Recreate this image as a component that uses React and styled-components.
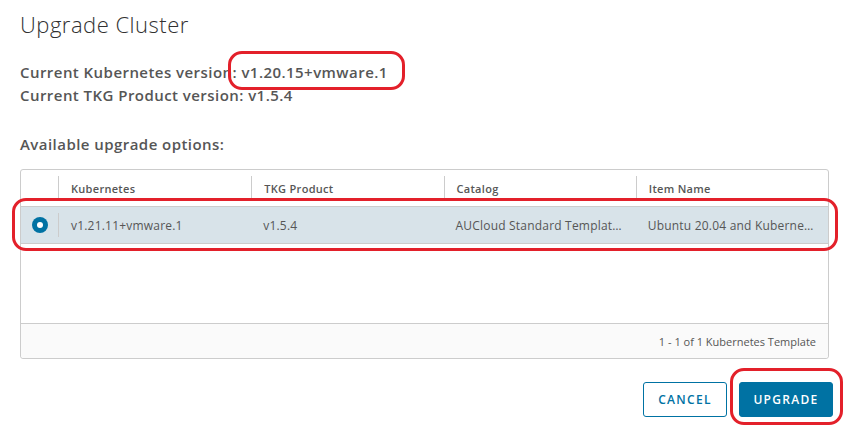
import styled, { createGlobalStyle } from 'styled-components';

const columns = ['Kubernetes', 'TKG Product', 'Catalog', 'Item Name'];

const rows = [
  {
    id: 'tkr-1',
    values: [
      'v1.21.11+vmware.1',
      'v1.5.4',
      'AUCloud Standard Templates',
      'Ubuntu 20.04 and Kubernetes v1.21.11',
    ],
  },
];

export default function App() {
  return (
    <>
      <GlobalStyle />
      <Dialog>
        <Title>Upgrade Cluster</Title>
        <Info>
          <InfoLine>
            Current Kubernetes version
            <Marked>
              : v1.20.15+vmware.1
              <Highlight $top={-10} $right={-17} $bottom={-6} $left={-5} />
            </Marked>
          </InfoLine>
          <InfoLine>Current TKG Product version: v1.5.4</InfoLine>
        </Info>
        <Label>Available upgrade options:</Label>

        <Grid>
          <HeaderRow>
            <SelectCell />
            {columns.map(col => (
              <HeadCell key={col}>{col}</HeadCell>
            ))}
          </HeaderRow>
          {rows.map(row => (
            <Row key={row.id} $selected>
              <SelectCell>
                <Radio />
              </SelectCell>
              {row.values.map((v, i) => (
                <Cell key={i}>{v}</Cell>
              ))}
              <Highlight $top={-9} $right={-10} $bottom={-8} $left={-9} />
            </Row>
          ))}
          <Body />
          <Footer>1 - 1 of 1 Kubernetes Template</Footer>
        </Grid>

        <Actions>
          <OutlineButton type="button">Cancel</OutlineButton>
          <Marked>
            <SolidButton type="button">Upgrade</SolidButton>
            <Highlight $top={-14} $right={-10} $bottom={-8} $left={-9} />
          </Marked>
        </Actions>
      </Dialog>
    </>
  );
}

const GlobalStyle = createGlobalStyle`
  body {
    margin: 0;
    background: #ffffff;
    font-family: "Open Sans", Lato, sans-serif;
  }
`;

const Dialog = styled.div`
  width: 846px;
  height: 433px;
  box-sizing: border-box;
  padding: 8px 17px 0 20px;
  display: flex;
  flex-direction: column;
`;

const Title = styled.h1`
  margin: 0;
  font-size: 22px;
  line-height: 32px;
  font-weight: 300;
  letter-spacing: 0.5px;
  color: #313131;
`;

const Info = styled.div`
  margin-top: 21px;
  display: flex;
  flex-direction: column;
`;

const InfoLine = styled.div`
  font-size: 15px;
  line-height: 23px;
  font-weight: 600;
  letter-spacing: 0.45px;
  color: #565656;
`;

const Marked = styled.span`
  position: relative;
  display: inline-block;
`;

const Highlight = styled.span`
  position: absolute;
  top: ${p => p.$top}px;
  right: ${p => p.$right}px;
  bottom: ${p => p.$bottom}px;
  left: ${p => p.$left}px;
  border: 3px solid #e3202a;
  border-radius: 14px;
  pointer-events: none;
`;

const Label = styled(InfoLine)`
  margin-top: 26px;
`;

const Grid = styled.div`
  margin-top: 13px;
  border: 1px solid #cccccc;
  border-radius: 3px;
  display: flex;
  flex-direction: column;
  height: 190px;
  box-sizing: border-box;
`;

const HeaderRow = styled.div`
  display: grid;
  grid-template-columns: 38px repeat(4, 1fr);
  height: 36px;
  align-items: center;
  border-bottom: 1px solid #cccccc;
`;

const SelectCell = styled.div`
  height: 24px;
  display: flex;
  align-items: center;
  justify-content: center;
  border-right: 1px solid #cccccc;
`;

const HeadCell = styled.div`
  padding: 0 12px;
  height: 24px;
  display: flex;
  align-items: center;
  font-size: 11px;
  font-weight: 600;
  letter-spacing: 0.3px;
  color: #565656;
  & + & {
    border-left: 1px solid #cccccc;
  }
`;

const Row = styled.div`
  position: relative;
  display: grid;
  grid-template-columns: 38px repeat(4, 1fr);
  height: 36px;
  align-items: center;
  background: ${p => (p.$selected ? '#d8e3e9' : '#ffffff')};
  border-bottom: 1px solid #cccccc;
`;

const Radio = styled.span`
  width: 16px;
  height: 16px;
  border-radius: 50%;
  background: #0072a3;
  display: flex;
  align-items: center;
  justify-content: center;
  &::after {
    content: '';
    width: 6px;
    height: 6px;
    border-radius: 50%;
    background: #ffffff;
  }
`;

const Cell = styled.div`
  padding: 0 12px;
  font-size: 12px;
  letter-spacing: 0.2px;
  color: #565656;
  white-space: nowrap;
  overflow: hidden;
  text-overflow: ellipsis;
`;

const Body = styled.div`
  flex: 1;
`;

const Footer = styled.div`
  height: 34px;
  border-top: 1px solid #cccccc;
  background: #fafafa;
  display: flex;
  align-items: center;
  justify-content: flex-end;
  padding: 0 12px;
  font-size: 11px;
  color: #565656;
  border-radius: 0 0 3px 3px;
`;

const Actions = styled.div`
  margin-top: 23px;
  margin-right: -4px;
  display: flex;
  justify-content: flex-end;
  gap: 12px;
`;

const BaseButton = styled.button`
  height: 35px;
  padding: 0;
  border-radius: 3px;
  font-family: "Open Sans", Lato, sans-serif;
  font-size: 12px;
  font-weight: 600;
  letter-spacing: 1.3px;
  text-transform: uppercase;
  cursor: pointer;
`;

const OutlineButton = styled(BaseButton)`
  width: 84px;
  background: #ffffff;
  border: 1px solid #0072a3;
  color: #0072a3;
`;

const SolidButton = styled(BaseButton)`
  width: 94px;
  background: #0072a3;
  border: 1px solid #0072a3;
  color: #ffffff;
  display: block;
`;
